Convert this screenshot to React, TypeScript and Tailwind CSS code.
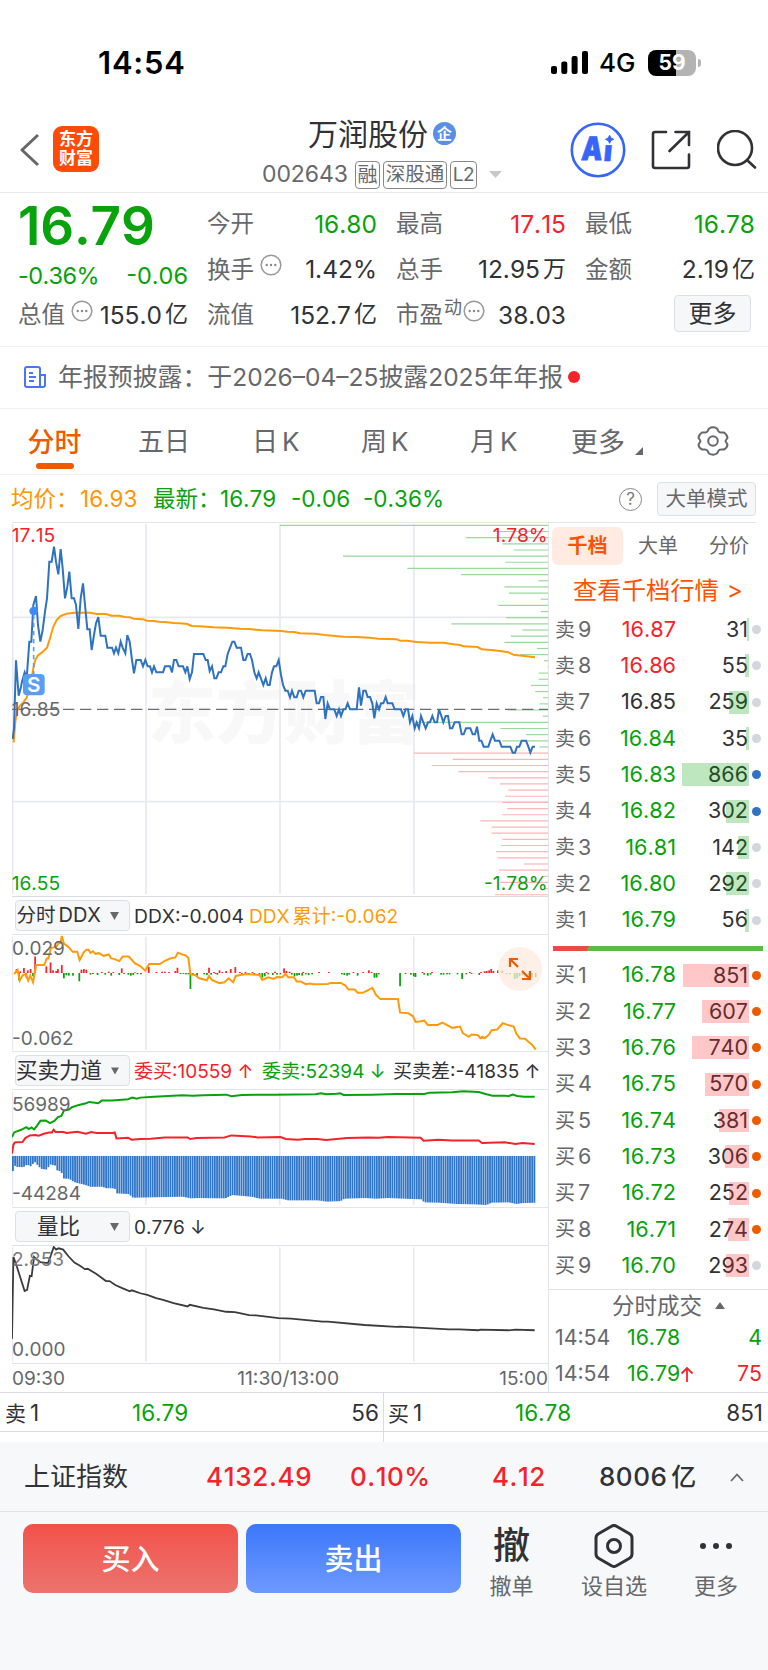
import React from 'react';

const QUOTE_COLORS = {
  up: 'text-[#f6222a]',
  down: 'text-[#07a20c]',
  flat: 'text-[#303236]',
};

type Tone = keyof typeof QUOTE_COLORS;

interface Level {
  label: string;
  price: string;
  qty: number;
  tone: Tone;
  dot: string;
}

const GREY = 'bg-[#d3d6dd]';
const BLUE = 'bg-[#2f73c4]';
const ORANGE = 'bg-[#ee5a00]';

const sells: Level[] = [
  { label: '9', price: '16.87', qty: 31, tone: 'up', dot: GREY },
  { label: '8', price: '16.86', qty: 55, tone: 'up', dot: GREY },
  { label: '7', price: '16.85', qty: 259, tone: 'flat', dot: GREY },
  { label: '6', price: '16.84', qty: 35, tone: 'down', dot: GREY },
  { label: '5', price: '16.83', qty: 866, tone: 'down', dot: BLUE },
  { label: '4', price: '16.82', qty: 302, tone: 'down', dot: BLUE },
  { label: '3', price: '16.81', qty: 142, tone: 'down', dot: GREY },
  { label: '2', price: '16.80', qty: 292, tone: 'down', dot: GREY },
  { label: '1', price: '16.79', qty: 56, tone: 'down', dot: GREY },
];

const buys: Level[] = [
  { label: '1', price: '16.78', qty: 851, tone: 'down', dot: ORANGE },
  { label: '2', price: '16.77', qty: 607, tone: 'down', dot: ORANGE },
  { label: '3', price: '16.76', qty: 740, tone: 'down', dot: ORANGE },
  { label: '4', price: '16.75', qty: 570, tone: 'down', dot: ORANGE },
  { label: '5', price: '16.74', qty: 381, tone: 'down', dot: ORANGE },
  { label: '6', price: '16.73', qty: 306, tone: 'down', dot: ORANGE },
  { label: '7', price: '16.72', qty: 252, tone: 'down', dot: ORANGE },
  { label: '8', price: '16.71', qty: 274, tone: 'down', dot: ORANGE },
  { label: '9', price: '16.70', qty: 293, tone: 'down', dot: GREY },
];

// Chart series, in the units of each chart's own viewBox
const priceLine =
  '38,672 42,640 48,436 56,542 62,520 66,500 74,472 80,490 88,380 94,380 100,270 108,243 114,330 121,380 128,345 135,290 141,250 148,140 155,140 162,95 168,140 175,178 182,102 188,160 195,250 202,215 208,170 215,250 222,250 228,270 235,342 242,250 249,205 255,270 262,343 269,343 275,405 282,360 288,325 295,306 302,362 316,362 322,398 336,398 342,415 348,398 355,415 362,380 368,398 376,415 382,360 389,380 396,435 402,475 409,435 422,435 429,454 436,435 443,454 450,454 456,472 462,454 469,472 489,472 495,454 510,454 516,472 522,435 529,435 536,454 549,454 556,472 562,454 569,492 576,472 582,417 610,417 617,435 623,435 629,468 636,454 643,490 649,490 656,472 663,472 670,454 676,454 683,417 697,380 703,380 710,398 723,398 730,435 736,435 743,417 750,417 756,435 763,472 770,490 776,472 790,510 797,490 803,510 809,510 816,472 822,454 829,454 836,435 843,480 849,510 856,527 863,527 870,547 876,527 883,547 890,547 896,527 903,527 910,547 917,527 944,527 950,565 957,565 963,546 970,546 976,612 983,565 990,583 1003,583 1010,603 1017,583 1023,603 1030,583 1036,583 1043,565 1050,583 1070,583 1077,517 1083,572 1090,527 1097,527 1103,546 1110,546 1117,565 1123,610 1130,565 1137,583 1143,565 1150,565 1157,546 1163,565 1177,565 1184,583 1203,583 1210,603 1217,583 1224,583 1230,622 1237,603 1244,640 1250,622 1257,640 1263,603 1270,622 1277,640 1284,622 1290,622 1297,603 1304,622 1311,622 1317,583 1324,603 1330,622 1337,603 1344,603 1350,640 1357,640 1364,622 1378,622 1385,658 1391,658 1398,640 1411,640 1418,658 1425,658 1431,635 1438,677 1444,677 1451,695 1465,695 1471,677 1478,658 1485,677 1498,677 1505,695 1531,695 1538,713 1545,713 1551,695 1558,695 1565,677 1578,677 1585,695 1591,713 1598,695 1605,695';

const averageLine =
  '41,682 46,620 52,585 60,572 70,562 80,548 90,520 100,460 106,435 113,422 125,413 141,398 150,370 160,335 170,315 182,303 200,296 222,293 270,293 290,297 318,297 335,302 357,302 375,306 390,307 400,311 430,313 440,317 462,318 475,320 495,321 520,324 540,325 562,327 575,333 600,334 640,337 680,338 720,341 750,342 785,346 845,348 860,350 882,351 900,355 945,356 975,360 1030,365 1070,366 1110,368 1135,371 1190,373 1200,377 1222,377 1250,381 1290,383 1330,383 1360,388 1380,390 1390,394 1432,396 1446,403 1480,406 1500,408 1525,412 1540,419 1605,427';

// left end of every resting-order bar, one per price tick from the top
const sellDepth = [
  840, 1480, 1398, 1507, 1541, 1029, 1516, 1222, 1383, 1615, 1513, 1527, 1622, 1495, 1622, 1519, 1354, 1567, 1532, 1513,
  1611, 1560, 1632, 1642, 1616, 1616, 1593, 1606, 1629, 1619, 1523, 1628, 1246, 1501, 1578, 1507, 1618,
];
const buyDepth = [
  1242, 1358, 1295, 1375, 1465, 1500, 1525, 1515, 1507, 1522, 1506, 1441, 1475, 1475, 1507, 1503, 1488, 1494, 1572, 1497,
  1632, 1500, 1632, 1485,
];

const ddxLine =
  '40,237 50,225 56,257 65,240 73,237 80,257 86,242 94,262 103,210 126,210 133,190 138,190 145,158 160,155 168,143 172,143 176,122 182,145 195,155 207,170 220,170 227,195 238,172 246,164 252,164 258,173 265,168 272,176 282,174 295,182 310,178 317,190 327,192 340,198 350,184 367,184 385,205 400,213 414,227 425,207 456,207 470,197 485,190 500,187 507,173 520,178 528,180 537,188 543,238 556,240 568,250 590,256 596,243 604,255 625,265 640,262 652,250 665,262 672,243 700,237 740,240 748,255 765,247 780,252 790,246 805,247 814,236 822,247 838,247 846,260 858,260 872,268 885,266 893,268 935,267 942,264 972,264 985,272 994,284 1012,284 1020,294 1035,294 1062,279 1072,300 1085,313 1135,313 1141,354 1165,356 1178,365 1185,382 1200,380 1210,378 1220,391 1248,391 1262,384 1290,400 1312,396 1320,416 1337,427 1345,420 1363,422 1370,431 1376,427 1383,431 1395,420 1402,407 1418,405 1434,386 1448,391 1465,396 1473,418 1483,432 1498,433 1507,442 1517,450 1528,466';

const ddxUp = [
  [47, 12], [58, 5], [68, 15], [79, 8], [87, 12], [100, 50], [132, 20], [144, 32], [151, 8], [160, 6], [165, 12],
  [176, 24], [232, 10], [239, 12], [246, 10], [290, 3], [310, 4], [323, 3], [347, 14], [385, 2], [424, 18], [446, 3],
  [462, 4], [470, 4], [482, 3], [500, 6], [506, 16], [596, 16], [610, 3], [626, 8], [634, 3], [645, 6], [658, 12],
  [671, 18], [684, 3], [700, 3], [720, 3], [760, 3], [784, 4], [810, 14], [817, 6], [826, 4], [865, 3], [910, 3],
  [938, 3], [1008, 3], [1036, 3], [1052, 8], [1060, 3], [1205, 3], [1232, 3], [1340, 3], [1372, 3], [1382, 5],
  [1388, 6], [1395, 8], [1401, 12], [1407, 6], [1420, 8], [1432, 7],
];
const ddxDown = [
  [54, 22], [75, 14], [94, 10], [182, 16], [189, 7], [196, 8], [208, 8], [226, 25], [258, 5], [265, 3], [278, 6],
  [300, 5], [317, 8], [340, 6], [354, 3], [366, 5], [373, 8], [380, 6], [392, 4], [402, 4], [515, 3], [523, 3],
  [530, 4], [537, 4], [543, 48], [550, 3], [562, 8], [582, 4], [590, 6], [602, 5], [615, 3], [620, 5], [690, 3],
  [710, 3], [725, 4], [740, 6], [748, 14], [755, 10], [765, 4], [778, 6], [790, 5], [800, 4], [832, 5], [840, 10],
  [847, 8], [853, 6], [862, 8], [872, 4], [880, 6], [890, 4], [975, 4], [982, 6], [990, 8], [996, 5], [1020, 8],
  [1068, 14], [1074, 14], [1080, 4], [1141, 40], [1157, 3], [1172, 5], [1180, 10], [1185, 12], [1210, 5], [1220, 8],
  [1228, 5], [1258, 5], [1265, 5], [1275, 4], [1282, 4], [1305, 4], [1318, 18], [1330, 4], [1345, 3], [1367, 6],
  [1445, 4], [1455, 4], [1468, 18], [1475, 16], [1482, 10], [1490, 6], [1498, 10], [1507, 12], [1517, 12], [1528, 12],
];

const sellForce =
  '34,172 40,158 60,150 75,142 82,148 90,143 97,149 105,138 115,123 130,122 142,130 155,123 165,112 175,108 182,92 195,90 205,82 225,75 245,70 255,66 280,70 290,62 320,62 365,58 377,53 390,56 400,53 440,50 520,46 550,47 580,46 645,44 660,49 690,45 780,44 900,43 915,40 930,43 960,41 970,40 980,45 1060,44 1130,42 1210,42 1225,38 1290,37 1320,34 1365,36 1385,42 1405,47 1440,47 1450,49 1462,44 1475,48 1495,50 1525,50';
const buyForce =
  '34,222 38,195 42,188 64,187 72,175 85,167 100,166 110,168 125,162 140,158 148,158 153,150 158,157 180,157 190,160 220,156 245,162 260,157 275,160 320,160 327,158 332,176 365,174 375,180 400,178 430,177 470,173 535,173 542,178 560,175 640,173 660,167 715,170 735,173 800,172 815,178 850,180 870,178 905,178 930,181 990,175 1050,173 1080,174 1105,172 1200,174 1208,183 1250,180 1290,182 1365,182 1375,190 1440,188 1470,193 1490,190 1525,193';

const forceGap = [
  [34, 277], [38, 257], [45, 262], [64, 263], [75, 255], [85, 260], [97, 247], [105, 257], [115, 268], [130, 270],
  [142, 255], [155, 258], [160, 272], [172, 276], [180, 297], [195, 298], [205, 305], [215, 310], [240, 316],
  [255, 322], [290, 322], [300, 326], [325, 327], [332, 342], [365, 344], [377, 355], [520, 352], [542, 357],
  [560, 356], [640, 357], [660, 347], [715, 352], [740, 358], [800, 358], [820, 363], [905, 363], [930, 367],
  [970, 365], [980, 358], [1040, 356], [1070, 358], [1105, 356], [1200, 360], [1208, 369], [1250, 370], [1300, 374],
  [1350, 375], [1385, 377], [1400, 370], [1450, 369], [1470, 374], [1490, 371], [1530, 370],
];

const volumeRatio =
  '34,328 38,80 48,110 60,150 70,183 77,180 85,137 90,138 97,80 105,88 115,96 130,98 137,98 145,75 153,50 160,58 167,54 180,58 195,78 212,97 228,107 242,117 250,116 275,132 302,153 312,153 330,166 350,175 370,184 376,181 400,190 420,195 445,205 465,210 495,220 535,230 541,225 580,234 610,239 645,246 670,247 710,256 730,257 795,265 830,267 920,276 935,276 1040,286 1130,292 1140,291 1190,294 1280,299 1310,299 1365,302 1370,300 1450,302 1470,300 1525,302';

const gapAt = (x: number) => {
  const i = forceGap.findIndex(p => p[0] > x);
  const [x0, y0] = forceGap[i - 1];
  const [x1, y1] = forceGap[i];
  return y0 + ((y1 - y0) * (x - x0)) / (x1 - x0);
};

const MoreDots: React.FC = () => (
  <svg viewBox="0 0 22 22" className="h-[22px] w-[22px] shrink-0" fill="none">
    <circle cx="11" cy="11" r="9.8" stroke="#999" strokeWidth="1.5" />
    <circle cx="6.7" cy="11" r="1.2" fill="#888" />
    <circle cx="11" cy="11" r="1.2" fill="#888" />
    <circle cx="15.3" cy="11" r="1.2" fill="#888" />
  </svg>
);

interface StatProps {
  label: React.ReactNode;
  value: string;
  unit?: string;
  tone?: Tone;
}

const Stat: React.FC<StatProps> = ({ label, value, unit, tone = 'flat' }) => (
  <div className="flex h-[45.5px] items-center justify-between">
    <span className="flex items-center text-[23.5px] text-[#66686c]">{label}</span>
    <span className={`flex items-center text-[24.5px] ${QUOTE_COLORS[tone]}`}>
      {value}
      {unit && <span className="ml-[3px] text-[23px]">{unit}</span>}
    </span>
  </div>
);

const Row: React.FC<{ side: string; level: Level }> = ({ side, level }) => (
  <div className="relative flex h-[36.3px] items-center pl-[6px] text-[21.5px]">
    <span className="flex w-[48px] items-center text-[#66686c]">
      <span className="mr-[3px] text-[20px]">{side}</span>
      {level.label}
    </span>
    <span className={`w-[73px] text-right text-[21.7px] ${QUOTE_COLORS[level.tone]}`}>{level.price}</span>
    <span className="w-[72px] text-right text-[#303236]">{level.qty}</span>
    <span
      className={`absolute right-[19px] h-[23px] ${side === '卖' ? 'bg-[#00a000]/25' : 'bg-[#ff2020]/25'}`}
      style={{ width: Math.max(2.5, level.qty * 0.0775) }}
    />
    <span className={`ml-[3.5px] h-[9px] w-[9px] rounded-full ${level.dot}`} />
  </div>
);

const Picker: React.FC<{ children: React.ReactNode }> = ({ children }) => (
  <div className="flex h-[31px] w-[115px] items-center justify-end rounded-[4px] border border-[#dcdfe5] bg-[#f6f7f9] pr-[10px] text-[#303236]">
    {children}
    <svg viewBox="0 0 9 8" className="ml-[9px] h-[8px] w-[9px]">
      <path d="M0 0h9L4.5 8z" fill="#66686c" />
    </svg>
  </div>
);

const Grid: React.FC<{ top: number; bottom: number }> = ({ top, bottom }) => (
  <g stroke="#e6e9ef" strokeWidth="1.6">
    {[35, 416, 798, 1180].map(x => (
      <line key={x} x1={x} x2={x} y1={top} y2={bottom} vectorEffect="non-scaling-stroke" />
    ))}
  </g>
);

const kTabs = ['日', '周', '月'];

const Header: React.FC = () => (
  <>
    <div className="flex h-[100px] items-center pt-[25px] pl-[98px]">
      <span className="w-[453px] text-[31px] font-semibold tracking-[0.8px] text-black">14:54</span>
      <svg viewBox="0 0 37 23" className="h-[23px] w-[37px] shrink-0">
        <rect x="0" y="15" width="6" height="8" rx="2" />
        <rect x="10.3" y="10.5" width="6" height="12.5" rx="2" />
        <rect x="20.6" y="5" width="6" height="18" rx="2" />
        <rect x="31" y="0" width="6" height="23" rx="2" />
      </svg>
      <span className="ml-[11px] w-[49px] shrink-0 text-[26px] font-medium text-black">4G</span>
      <div className="flex h-[26px] w-[48px] shrink-0 items-center justify-center rounded-[8px] bg-[linear-gradient(90deg,#000_59%,#b3b3b3_59%)] text-[21px] font-bold text-white">
        59
      </div>
      <span className="ml-[2px] h-[8px] w-[2.5px] rounded-r-full bg-[#b3b3b3]" />
    </div>

    <div className="flex h-[93px] items-start border-b-[1.5px] border-[#e9eaec]">
      <svg viewBox="0 0 20 34" className="mt-[33px] ml-[20px] h-[34px] w-[20px]" fill="none">
        <path d="M18 2 2 17l16 15" stroke="#666" strokeWidth="3" strokeLinejoin="round" />
      </svg>
      <div className="mt-[26px] ml-[13px] flex h-[46px] w-[46px] flex-col items-center justify-center gap-[2px] rounded-[9px] bg-[#ff4a08] text-[17px] font-bold text-white">
        <span>东方</span>
        <span>财富</span>
      </div>
      <div className="w-[371px] pt-[18px] pl-[109px]">
        <div className="flex h-[31px] items-center pl-[100px]">
          <span className="w-[125px] shrink-0 text-[30px] text-[#303236]">万润股份</span>
          <span className="flex h-[23px] w-[23px] shrink-0 items-center justify-center rounded-full bg-[#5a8fe8] text-[15px] font-bold text-white">
            企
          </span>
        </div>
        <div className="mt-[11px] flex h-[29px] items-center pl-[54px] text-[#66686c]">
          <span className="w-[93px] shrink-0 text-[23px] tracking-[-0.1px]">002643</span>
          <span className="flex h-[28px] w-[25px] shrink-0 items-center justify-center rounded-[4px] border-[1.5px] border-[#888] text-[20px]">融</span>
          <span className="ml-[3px] flex h-[28px] w-[64px] shrink-0 items-center justify-center rounded-[4px] border-[1.5px] border-[#888] text-[19.5px]">深股通</span>
          <span className="ml-[3px] flex h-[28px] w-[27px] shrink-0 items-center justify-center rounded-[4px] border-[1.5px] border-[#888] text-[19px] tracking-tight">L2</span>
          <svg viewBox="0 0 13 7" className="ml-[12px] h-[7px] w-[13px] shrink-0">
            <path d="M0 0h13L6.5 7z" fill="#c8c8c8" />
          </svg>
        </div>
      </div>
      <svg viewBox="0 0 56 56" className="mt-[22px] ml-[100px] h-[56px] w-[56px]" fill="none">
        <circle cx="28" cy="28" r="26.2" stroke="#3765fa" strokeWidth="2.6" />
        <g fill="#3765fa" stroke="#3765fa" fontFamily="Inter, sans-serif" fontWeight="900" transform="skewX(-5)">
          <text x="14" y="38.3" fontSize="32" strokeWidth="0.8" textLength="21" lengthAdjust="spacingAndGlyphs">A</text>
          <text x="36.5" y="38.8" fontSize="29" strokeWidth="0.5">ı</text>
        </g>
        <path d="m39.6 13.2 1.3 2.8 2.8 1.3-2.8 1.3-1.3 2.8-1.3-2.8-2.8-1.3 2.8-1.3z" fill="#3765fa" stroke="#3765fa" />
      </svg>
      <svg viewBox="0 0 40 40" className="mt-[30px] ml-[25px] h-[40px] w-[40px]" fill="none" stroke="#303236" strokeWidth="2.6" strokeLinecap="round">
        <path d="M15 2H4a2 2 0 0 0-2 2v32a2 2 0 0 0 2 2h32a2 2 0 0 0 2-2V24.5M24.5 2H38v13M38 2 18.5 21" />
      </svg>
      <svg viewBox="0 0 40 40" className="mt-[30px] ml-[26px] h-[40px] w-[40px]" fill="none" stroke="#303236" strokeWidth="2.6" strokeLinecap="round">
        <circle cx="18" cy="18" r="17" />
        <path d="m30.5 30.5 7.5 7" />
      </svg>
    </div>
  </>
);

const Summary: React.FC = () => (
  <>
    <div className="grid h-[154px] grid-cols-[170px_170px_170px_170px] gap-x-[19px] border-b-[1.5px] border-[#f1f2f4] pt-[8px] pl-[18px]">
      <div>
        <div className="flex h-[50px] items-center pt-px text-[53px] font-semibold tracking-[-0.2px] text-[#07a20c]">16.79</div>
        <div className="flex h-[41px] items-center justify-between pt-[8px] text-[23.5px] text-[#07a20c]">
          <span className="tracking-[-0.6px]">-0.36%</span>
          <span>-0.06</span>
        </div>
        <Stat label={<>总值<span className="mt-[-8px] ml-[6px]"><MoreDots /></span></>} value="155.0" unit="亿" />
      </div>
      <div>
        <Stat label="今开" value="16.80" tone="down" />
        <Stat label={<>换手<span className="mt-[-8px] ml-[6px]"><MoreDots /></span></>} value="1.42%" />
        <Stat label="流值" value="152.7" unit="亿" />
      </div>
      <div>
        <Stat label="最高" value="17.15" tone="up" />
        <Stat label="总手" value="12.95" unit="万" />
        <Stat
          label={<>市盈<span className="mt-[-14px] ml-[1px] text-[18px]">动</span><span className="mt-[-8px] ml-[1px]"><MoreDots /></span></>}
          value="38.03"
        />
      </div>
      <div>
        <Stat label="最低" value="16.78" tone="down" />
        <Stat label="金额" value="2.19" unit="亿" />
        <div className="flex h-[45.5px] items-center justify-end pr-[4px]">
          <span className="mb-[2px] flex h-[37px] w-[77px] items-center justify-center rounded-[4px] border border-[#dcdfe5] bg-[#f6f7f9] text-[24px] text-[#303236]">更多</span>
        </div>
      </div>
    </div>

    <div className="flex h-[61.5px] items-center border-b-[1.5px] border-[#f1f2f4] pl-[24px]">
      <svg viewBox="0 0 22 22" className="h-[22px] w-[22px]" fill="none" stroke="#4876f7" strokeWidth="2">
        <path d="M16 21H3a2 2 0 0 1-2-2V3a2 2 0 0 1 2-2h11a2 2 0 0 1 2 2v18h3a2 2 0 0 0 2-2V9h-5M5 7h4M5 11h7M5 15h5" />
      </svg>
      <span className="ml-[12px] flex items-center text-[24.9px] whitespace-nowrap text-[#66686c]">
        年报预披露：于<span className="text-[24.5px]">2026–04–25</span>披露<span className="text-[24.5px]">2025</span>年年报
      </span>
      <span className="ml-[5px] h-[12px] w-[12px] rounded-full bg-[#f6222a]" />
    </div>
  </>
);

const TabBar: React.FC = () => (
  <>
    <div className="flex h-[66.5px] items-start border-b-[1.5px] border-[#f1f2f4] text-[26px] text-[#66686c]">
      <div className="ml-[27px] flex w-[55px] flex-col items-center pt-[20px] font-medium text-[#ee5a00]">
        <span className="h-[26px] text-[27px]">分时</span>
        <span className="mt-[8px] h-[6px] w-[38px] rounded-full bg-[#ee5a00]" />
      </div>
      <span className="mr-[62px] ml-[56px] pt-[20px]">五日</span>
      {kTabs.map(t => (
        <span key={t} className="w-[109px] pt-[20px] whitespace-nowrap">
          {t}<span className="ml-[4px]">K</span>
        </span>
      ))}
      <span className="ml-[-8px] pt-[20px] text-[27px]">更多</span>
      <svg viewBox="0 0 8 8" className="mt-[38px] ml-[10px] h-[8px] w-[8px]">
        <path d="M8 0v8H0z" fill="#66686c" />
      </svg>
      <svg viewBox="0 0 32 30" className="mt-[17px] ml-[54px] h-[30px] w-[32px]" fill="none" stroke="#66686c" strokeWidth="2">
        <path d="M12 2.5q4-2.5 8 0l1.500 2.700q.8 1.300 2.300 1.200l3.200.1q3.200 2 3.500 5.500L29 14q-.8 1 0 2l1.500 2.500q-.3 3.500-3.500 5l-3.200.1q-1.500 0-2.300 1.200L20 27.500q-4 2.500-8 0l-1.500-2.700q-.8-1.200-2.300-1.200L5 23.500q-3.200-1.500-3.500-5L3 16q.8-1 0-2L1.500 12Q1.800 8.500 5 6.500l3.200-.1q1.500.1 2.300-1.200z" strokeLinejoin="round" />
        <circle cx="16" cy="15" r="4.8" />
      </svg>
    </div>
    <div className="flex h-[47px] items-center pt-px pl-[11px] text-[22.5px]">
      <span className="w-[69px] whitespace-nowrap text-[#ff9500]">均价：</span>
      <span className="w-[73px] text-[#ff9500]">16.93</span>
      <span className="w-[67px] whitespace-nowrap text-[#07a20c]">最新：</span>
      <span className="w-[71px] text-[#07a20c]">16.79</span>
      <span className="w-[72px] text-[#07a20c]">-0.06</span>
      <span className="w-[256px] text-[#07a20c]">-0.36%</span>
      <span className="flex h-[23px] w-[23px] items-center justify-center rounded-full border-[1.5px] border-[#888] text-[17px] text-[#77797d]">?</span>
      <span className="ml-[15px] flex h-[34px] w-[99px] items-center justify-center rounded-[4px] border border-[#dcdfe5] bg-[#f6f7f9] text-[20.5px] text-[#66686c]">大单模式</span>
    </div>
  </>
);

const PriceChart: React.FC = () => (
  <svg viewBox="36 24 1608 1119" className="block h-[373px] w-[536px]" fontFamily="Inter, 'Noto Sans CJK SC', sans-serif" fill="none">
    <text x="444" y="668" fontSize="204" fontWeight="900" fill="#f8f8f8">东方财富</text>
    <g stroke="#e6e9ef" strokeWidth="5">
      {[38, 438, 840, 1242].map(x => <line key={x} x1={x} x2={x} y1="27" y2="1137" />)}
      <line x1="36" x2="1644" y1="307" y2="307" />
      <line x1="36" x2="1644" y1="860" y2="860" />
    </g>
    {sellDepth.map((x, i) => (
      <line key={i} x1={x} x2="1644" y1={31 + i * 18.47} y2={31 + i * 18.47} stroke="#98da99" strokeWidth="3.5" />
    ))}
    {buyDepth.map((x, i) => (
      <line key={i} x1={x} x2="1644" y1={714.5 + i * 18.47} y2={714.5 + i * 18.47} stroke="#ffb4b6" strokeWidth="3.5" />
    ))}
    <line x1="36" x2="1644" y1="583" y2="583" stroke="#6b6d70" strokeWidth="4" strokeDasharray="34 17" />
    <polyline points={averageLine} stroke="#ff9b0a" strokeWidth="6" strokeLinejoin="round" />
    <polyline points={priceLine} stroke="#2e72c0" strokeWidth="6" />
    <line x1="101" x2="101" y1="300" y2="478" stroke="#5a9df8" strokeWidth="5" strokeDasharray="13 11" />
    <circle cx="101" cy="288" r="13" fill="#3f8bf5" />
    <rect x="69" y="477" width="65" height="64" rx="12" fill="#5a9df8" />
    <text x="101" y="531" fontSize="62" fontWeight="600" fill="#fff" textAnchor="middle">S</text>
    <g fontSize="57.5">
      <text x="35" y="80" fill="#f6222a">17.15</text>
      <text x="1643" y="80" fill="#f6222a" textAnchor="end">1.78%</text>
      <text x="35" y="602" fill="#66686c">16.85</text>
      <text x="35" y="1124" fill="#07a20c">16.55</text>
      <text x="1643" y="1124" fill="#07a20c" textAnchor="end">-1.78%</text>
    </g>
  </svg>
);

const IndicatorCharts: React.FC = () => (
  <>
    <div className="flex h-[38px] items-center border-t-[1.5px] border-[#d9dce2] pl-[3px] text-[19.5px]">
      <Picker>
        <span className="whitespace-nowrap">分时<span className="ml-[3px] text-[20px]">DDX</span></span>
      </Picker>
      <span className="ml-[4px] w-[115px] pt-[2px] text-[19.3px] text-[#303236]">DDX:-0.004</span>
      <span className="pt-[2px] text-[19.1px] whitespace-nowrap text-[#ff9b0a]">DDX<span className="ml-[3px]">累计</span>:-0.062</span>
    </div>
    <div className="relative h-[118px] border-y-[1.5px] border-[#e2e5ea]">
      <svg viewBox="34 119 1529 348" preserveAspectRatio="none" className="block h-[115px] w-[536px]" fill="none">
        <Grid top={124} bottom={467} />
        {ddxUp.map(([x, h]) => <rect key={x} x={x - 2.5} y={234 - h} width="5" height={h} fill="#f6222a" />)}
        {ddxDown.map(([x, h]) => <rect key={x} x={x - 2.5} y="234" width="5" height={h} fill="#07a20c" />)}
        <polyline points={ddxLine} stroke="#ff9b0a" strokeWidth="2" vectorEffect="non-scaling-stroke" />
      </svg>
      <span className="absolute top-[4px] left-0 text-[19px] text-[#66686c]">0.029</span>
      <span className="absolute bottom-[3px] left-0 text-[19px] text-[#66686c]">-0.062</span>
      <svg viewBox="0 0 44 44" className="absolute top-[12px] right-[6px] h-[44px] w-[44px]" fill="none">
        <circle cx="22" cy="22" r="22" fill="#ffe9de" fillOpacity=".75" />
        <path d="M12 20v-8h8M12 12l8 8M32 24v8h-8M32 32l-8-8" stroke="#ee5a00" strokeWidth="2.2" />
      </svg>
    </div>

    <div className="flex h-[37px] items-center pl-[3px] text-[19px] whitespace-nowrap">
      <Picker>
        <span className="text-[21.5px]">买卖力道</span>
      </Picker>
      <span className="ml-[4px] w-[128px] pt-[2px] text-[#f6222a]">委买:10559 ↑</span>
      <span className="w-[131px] pt-[2px] text-[#07a20c]">委卖:52394 ↓</span>
      <span className="pt-[2px] text-[#303236]">买卖差:-41835 ↑</span>
    </div>
    <div className="relative h-[119px] border-y-[1.5px] border-[#e2e5ea]">
      <svg viewBox="34 30 1529 350" preserveAspectRatio="none" className="block h-[116px] w-[536px]" fill="none">
        <Grid top={36} bottom={377} />
        {Array.from({ length: 236 }, (_, i) => 34 + i * 6.33).map(x => (
          <rect key={x} x={x} y="229" width="5.2" height={gapAt(x + 0.5) - 229} fill="#2f76c9" />
        ))}
        <polyline points={sellForce} stroke="#07a20c" strokeWidth="2" vectorEffect="non-scaling-stroke" />
        <polyline points={buyForce} stroke="#f6222a" strokeWidth="2" vectorEffect="non-scaling-stroke" />
      </svg>
      <span className="absolute top-[5px] left-0 text-[19px] text-[#66686c]">56989</span>
      <span className="absolute bottom-[4px] left-0 text-[19px] text-[#66686c]">-44284</span>
    </div>

    <div className="flex h-[37px] items-center pl-[3px] text-[19px]">
      <Picker>
        <span className="mr-[21px] text-[21.5px]">量比</span>
      </Picker>
      <span className="ml-[4px] pt-[2px] text-[#303236]">0.776 ↓</span>
    </div>
    <div className="relative h-[119px] border-y-[1.5px] border-[#dfe2e8]">
      <svg viewBox="34 47 1529 351" preserveAspectRatio="none" className="block h-[116px] w-[536px]" fill="none">
        <Grid top={51} bottom={397} />
        <polyline points={volumeRatio} stroke="#3a3b3d" strokeWidth="1.8" vectorEffect="non-scaling-stroke" />
      </svg>
      <span className="absolute top-[4px] left-0 text-[19px] text-[#77797d]">2.853</span>
      <span className="absolute bottom-[4px] left-0 text-[19px] text-[#66686c]">0.000</span>
    </div>
    <div className="flex h-[28px] items-center justify-between pt-px text-[19px] text-[#66686c]">
      <span>09:30</span>
      <span className="pl-[12px] text-[19.3px]">11:30/13:00</span>
      <span>15:00</span>
    </div>
  </>
);

const OrderBook: React.FC = () => (
  <div className="w-[219px] shrink-0">
    <div className="mt-[4px] ml-[3px] flex h-[38px] items-center text-[20px] text-[#66686c]">
      <span className="flex h-[38px] w-[71px] items-center justify-center rounded-[6px] bg-[#ffebe2] font-bold text-[#ff5200]">千档</span>
      <span className="ml-[15px]">大单</span>
      <span className="ml-[31px]">分价</span>
    </div>
    <div className="flex h-[46.5px] items-center justify-center pt-[4px] pr-px text-[24.3px] whitespace-nowrap text-[#ff5200]">
      查看千档行情<span className="ml-[8px]">&gt;</span>
    </div>
    {sells.map(l => <Row key={l.label} side="卖" level={l} />)}
    <div className="mt-[8px] mb-[6px] ml-[4px] h-[5px] w-[210px] bg-[linear-gradient(120deg,#ea4a4a_17%,#5cbb47_17%)]" />
    {buys.map(l => <Row key={l.label} side="买" level={l} />)}
    <div className="mt-[5.5px] flex h-[32px] items-center justify-center border-t-[1.5px] border-[#dfe2e8] pl-[20px] text-[22.5px] text-[#66686c]">
      分时成交
      <svg viewBox="0 0 10 7" className="ml-[13px] h-[7px] w-[10px]">
        <path d="M0 7h10L5 0z" fill="#66686c" />
      </svg>
    </div>
    <div className="flex h-[33.500px] items-center pr-[6px] pl-[6px] text-[21.3px]">
      <span className="w-[72px] text-[#66686c]">14:54</span>
      <span className="text-[#07a20c]">16.78</span>
      <span className="ml-auto text-[#07a20c]">4</span>
    </div>
    <div className="flex h-[38.500px] items-center pr-[6px] pl-[6px] text-[21.3px]">
      <span className="w-[72px] text-[#66686c]">14:54</span>
      <span className="text-[#07a20c]">16.79</span>
      <svg viewBox="0 0 14 16" className="h-[16px] w-[14px]" fill="none" stroke="#f6222a" strokeWidth="1.8">
        <path d="M7 16V2M1.5 7.5 7 2l5.5 5.5" />
      </svg>
      <span className="ml-auto text-[#f6222a]">75</span>
    </div>
  </div>
);

const Footer: React.FC = () => (
  <>
    <div className="flex h-[50px] border-t-[1.5px] border-[#d9dce2] text-[22.5px] text-[#303236]">
      <div className="w-[384px] border-r-[1.5px] border-[#d9dce2]">
        <div className="flex h-[39px] items-center border-b-[1.5px] border-[#d9dce2] pt-[3px] pr-[4px] pl-[5px]">
          <span className="flex w-[127px] items-center"><span className="mr-[4px] text-[21px]">卖</span>1</span>
          <span className="text-[#07a20c]">16.79</span>
          <span className="ml-auto">56</span>
        </div>
      </div>
      <div className="w-[384px]">
        <div className="flex h-[39px] items-center border-b-[1.5px] border-[#d9dce2] pt-[3px] pr-[5px] pl-[4px]">
          <span className="flex w-[127px] items-center"><span className="mr-[4px] text-[21px]">买</span>1</span>
          <span className="text-[#07a20c]">16.78</span>
          <span className="ml-auto">851</span>
        </div>
      </div>
    </div>

    <div className="h-[228px] bg-[#f6f8fa]">
      <div className="flex h-[70px] items-center border-b-[1.5px] border-[#e2e4e7] pt-px pl-[24px] text-[26px] font-medium text-[#f6222a]">
        <span className="w-[182px] text-[26px] font-normal text-[#303236]">上证指数</span>
        <span className="w-[144px] tracking-[0.7px]">4132.49</span>
        <span className="w-[142px] tracking-[0.5px]">0.10%</span>
        <span className="w-[107px] tracking-[0.5px]">4.12</span>
        <span className="flex w-[131px] items-center tracking-[0.5px] text-[#303236]">8006<span className="ml-[4px] text-[25px]">亿</span></span>
        <svg viewBox="0 0 14 9" className="h-[9px] w-[14px]" fill="none" stroke="#66686c" strokeWidth="1.8">
          <path d="m1 8 6-6.5L13 8" />
        </svg>
      </div>
      <div className="flex pt-[12px] pl-[23px]">
        <div className="flex h-[69px] w-[215px] items-center justify-center rounded-[10px] bg-gradient-to-b from-[#f2504a] to-[#ec736e] pt-px text-[29px] font-medium text-white">买入</div>
        <div className="ml-[8px] flex h-[69px] w-[215px] items-center justify-center rounded-[10px] bg-gradient-to-b from-[#3b77fa] to-[#6d99fe] pt-px text-[29px] font-medium text-white">卖出</div>
        <div className="ml-[19px] flex w-[63px] flex-col items-center text-[22px] text-[#66686c]">
          <span className="h-[44px] pt-[3px] text-[37px] font-medium text-[#303236]">撤</span>
          <span className="mt-[7px]">撤单</span>
        </div>
        <div className="ml-[34px] flex w-[74px] flex-col items-center text-[22px] text-[#66686c]">
          <svg viewBox="0 0 40 44" className="h-[44px] w-[40px]" fill="none" stroke="#303236" strokeWidth="3">
            <path d="M17.5 2.2a5 5 0 0 1 5 0l13 7.5a5 5 0 0 1 2.5 4.3v16a5 5 0 0 1-2.5 4.3l-13 7.5a5 5 0 0 1-5 0l-13-7.5A5 5 0 0 1 2 30V14a5 5 0 0 1 2.5-4.3z" />
            <circle cx="20" cy="22" r="6.5" />
          </svg>
          <span className="mt-[7px]">设自选</span>
        </div>
        <div className="ml-[33px] flex w-[64px] flex-col items-center text-[22px] text-[#66686c]">
          <span className="flex h-[44px] items-center gap-[7px]">
            <i className="h-[6px] w-[6px] rounded-full bg-[#303236]" />
            <i className="h-[6px] w-[6px] rounded-full bg-[#303236]" />
            <i className="h-[6px] w-[6px] rounded-full bg-[#303236]" />
          </span>
          <span className="mt-[7px]">更多</span>
        </div>
      </div>
    </div>
  </>
);

const App: React.FC = () => {
  return (
    <main className="h-[1670px] w-[768px] overflow-hidden bg-white font-['Inter','Noto_Sans_CJK_SC',sans-serif] leading-none [font-kerning:none]">
      <Header />
      <Summary />
      <TabBar />
      <div className="mr-[12px] ml-[12px] border-t-[1.5px] border-[#e2e5ea]" />
      <div className="flex h-[869px] overflow-hidden">
        <div className="ml-[12px] w-[537px] shrink-0 border-r-[1.5px] border-[#e2e5ea]">
          <PriceChart />
          <IndicatorCharts />
        </div>
        <OrderBook />
      </div>
      <Footer />
    </main>
  );
};

export default App;
